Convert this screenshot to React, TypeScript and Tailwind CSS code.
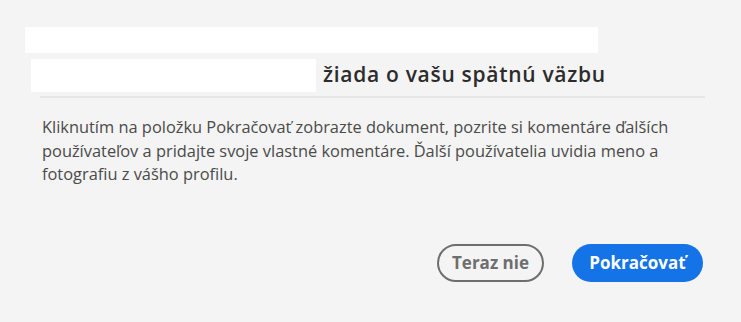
import React from "react";

export default function App() {
  return (
    <div
      className="w-[741px] h-[322px] bg-[#f4f4f4] flex flex-col overflow-hidden"
      style={{ fontFamily: '"Open Sans", "Noto Sans", sans-serif' }}
    >
      <div className="ml-[25px] mt-[27px] w-[573px] h-[26px] bg-white" />
      <div className="flex items-center mt-[6px] ml-[31px] h-[33px]">
        <div className="w-[285px] h-[33px] bg-white" />
        <div className="ml-[7px] text-[21px] font-semibold tracking-[0.7px] text-[#2c2c2c] leading-none -mt-[3px]">
          žiada o vašu spätnú väzbu
        </div>
      </div>
      <div className="ml-[40px] mr-[36px] mt-[4px] h-[2px] bg-[#e6e6e6]" />
      <p className="ml-[42px] mr-[20px] mt-[17px] text-[16.4px] leading-[23.5px] text-[#4b4b4b]">
        Kliknutím na položku Pokračovať zobrazte dokument, pozrite si komentáre ďalších
        <br />
        používateľov a pridajte svoje vlastné komentáre. Ďalší používatelia uvidia meno a
        <br />
        fotografiu z vášho profilu.
      </p>
      <div className="flex justify-end gap-[28px] mr-[38px] mt-auto mb-[40px]">
        <button className="h-[38px] w-[107px] rounded-full border-2 border-[#6e6e6e] text-[#6e6e6e] text-[17px] font-bold flex items-center justify-center">
          Teraz nie
        </button>
        <button className="h-[38px] w-[131px] rounded-full bg-[#1473e6] text-white text-[17px] font-bold flex items-center justify-center">
          Pokračovať
        </button>
      </div>
    </div>
  );
}
